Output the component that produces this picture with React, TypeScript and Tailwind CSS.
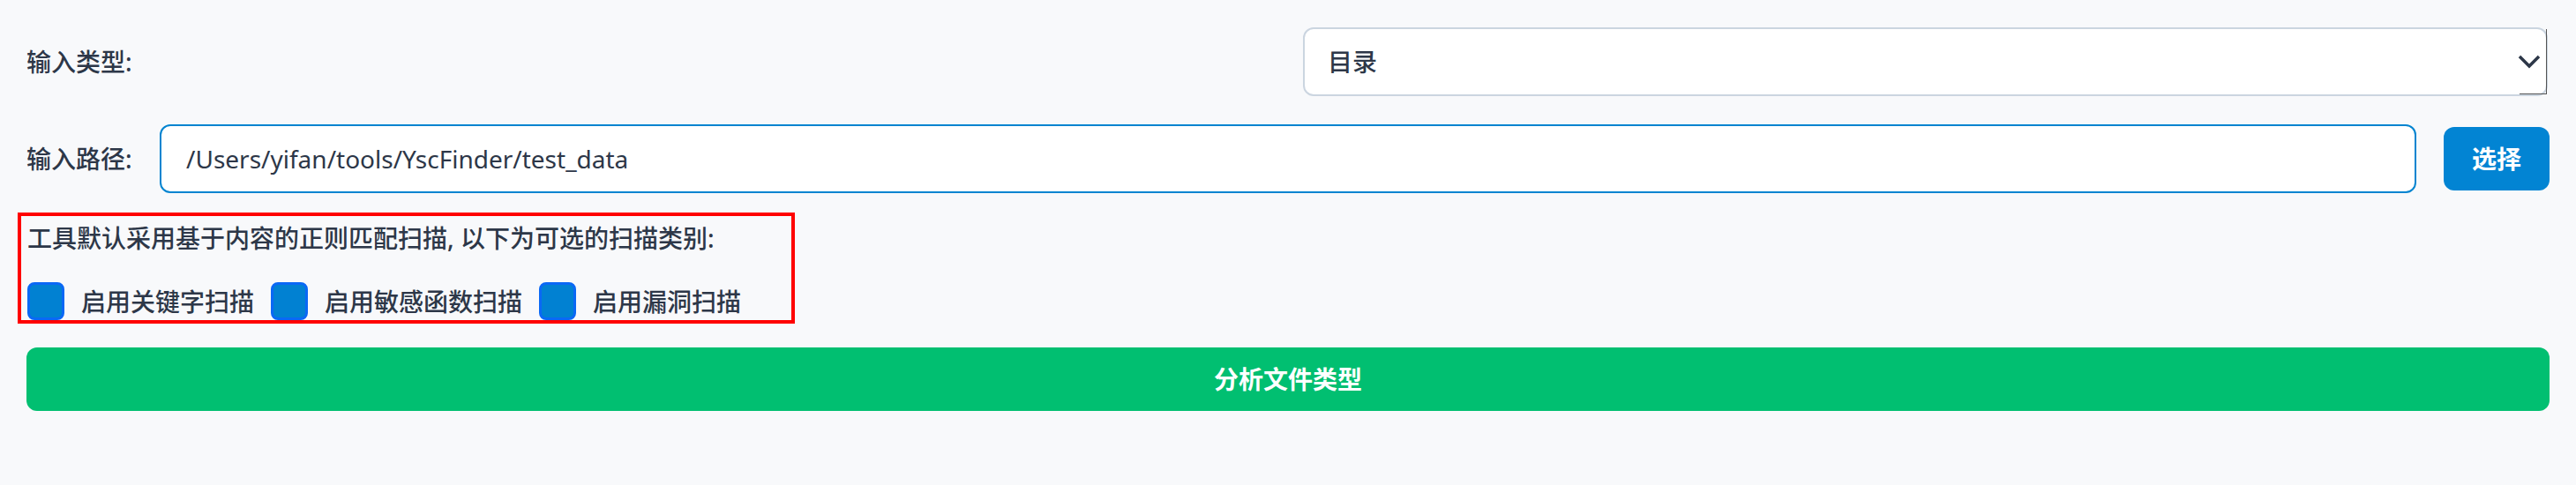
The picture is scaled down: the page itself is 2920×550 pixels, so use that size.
import { useState } from "react";

const font = "font-['Noto_Sans','Noto_Sans_CJK_SC',sans-serif]";

const scanTypes = ["启用关键字扫描", "启用敏感函数扫描", "启用漏洞扫描"];

export default function App() {
    const [path, setPath] = useState("/Users/yifan/tools/YscFinder/test_data");

    return (
        <div className={`min-h-[550px] w-full bg-[#f8f9fb] px-[30px] pt-[31px] font-medium text-[#2d3748] ${font}`}>
            {/* input type */}
            <div className="flex h-[78px] items-center">
                <span className="text-[28px] leading-[42px]">输入类型:</span>
                <div className="relative ml-auto mr-[2px] flex h-[78px] w-[1411px] items-center rounded-[12px] border-2 border-[#cbd5e0] bg-white pl-[26px] pr-[4px]">
                    <span className="text-[28px] leading-[42px]">目录</span>
                    <svg className="ml-auto mr-[2px]" width="26" height="16" viewBox="0 0 26 16" fill="none">
                        <path d="M2 2 L13 13 L24 2" stroke="#2d3748" strokeWidth="3.5" />
                    </svg>
                    {/* native select edge */}
                    <span className="absolute right-[-1px] bottom-[0px] h-[74px] w-[31px] border-r border-b border-[#555]" />
                </div>
            </div>

            {/* input path */}
            <div className="mt-[32px] flex h-[78px] items-center">
                <span className="w-[151px] shrink-0 text-[28px] leading-[42px]">输入路径:</span>
                <input
                    value={path}
                    onChange={(e) => setPath(e.target.value)}
                    className="h-[78px] min-w-0 flex-1 rounded-[12px] border-2 border-[#0284d0] bg-white pl-[28px] text-[28px] font-normal text-[#2d3748] outline-none"
                />
                <button className="ml-[31px] h-[72px] w-[120px] shrink-0 rounded-[12px] bg-[#0284d3] text-[28px] font-bold text-white">
                    选择
                </button>
            </div>

            {/* scan options */}
            <div className="ml-[-10px] mt-[22px] w-[881px] border-4 border-[#ff0000] pl-[7px] pt-[4px]">
                <p className="text-[28px] leading-[42px]">工具默认采用基于内容的正则匹配扫描, 以下为可选的扫描类别:</p>
                <div className="mt-[29px] flex items-center gap-[19px]">
                    {scanTypes.map((t) => (
                        <label key={t} className="flex items-center gap-[19px]">
                            <input
                                type="checkbox"
                                className="h-[43px] w-[42px] appearance-none rounded-[8px] border-[3px] border-[#0a68f5] bg-[#0181d2]"
                            />
                            <span className="text-[28px] leading-[42px]">{t}</span>
                        </label>
                    ))}
                </div>
            </div>

            {/* submit */}
            <button className="mt-[27px] h-[72px] w-full rounded-[12px] bg-[#01bf71] text-[28px] font-bold text-white">
                分析文件类型
            </button>
        </div>
    );
}
